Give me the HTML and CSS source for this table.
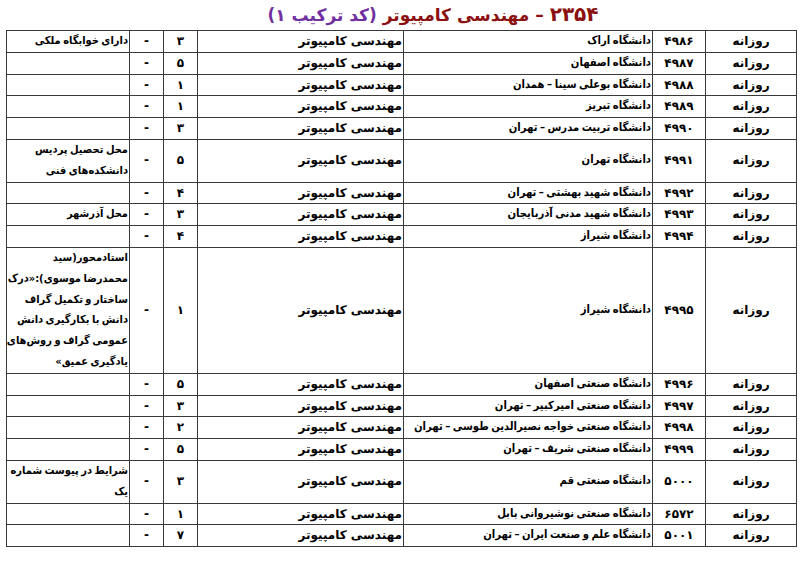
FILE: index.html
```html
<!DOCTYPE html>
<html lang="fa" dir="rtl">
<head>
<meta charset="utf-8">
<title>۲۳۵۴ – مهندسی کامپیوتر</title>
<link rel="stylesheet" href="styles.css">
</head>
<body>
<h1 class="title"><span class="title-main"><span class="title-num">۲۳۵۴</span> – مهندسی کامپیوتر</span> <span class="title-sub">(کد ترکیب ۱)</span></h1>
<table class="grid">
<colgroup>
<col class="c-type"><col class="c-code"><col class="c-uni"><col class="c-field"><col class="c-count"><col class="c-dash"><col class="c-note">
</colgroup>
<tbody>
<tr><td class="ctr">روزانه</td><td class="ctr">۴۹۸۶</td><td class="uni">دانشگاه اراک</td><td>مهندسی کامپیوتر</td><td class="ctr">۳</td><td class="ctr">-</td><td class="note">دارای خوابگاه ملکی</td></tr>
<tr><td class="ctr">روزانه</td><td class="ctr">۴۹۸۷</td><td class="uni">دانشگاه اصفهان</td><td>مهندسی کامپیوتر</td><td class="ctr">۵</td><td class="ctr">-</td><td class="note"></td></tr>
<tr><td class="ctr">روزانه</td><td class="ctr">۴۹۸۸</td><td class="uni">دانشگاه بوعلی سینا – همدان</td><td>مهندسی کامپیوتر</td><td class="ctr">۱</td><td class="ctr">-</td><td class="note"></td></tr>
<tr><td class="ctr">روزانه</td><td class="ctr">۴۹۸۹</td><td class="uni">دانشگاه تبریز</td><td>مهندسی کامپیوتر</td><td class="ctr">۱</td><td class="ctr">-</td><td class="note"></td></tr>
<tr><td class="ctr">روزانه</td><td class="ctr">۴۹۹۰</td><td class="uni">دانشگاه تربیت مدرس – تهران</td><td>مهندسی کامپیوتر</td><td class="ctr">۳</td><td class="ctr">-</td><td class="note"></td></tr>
<tr><td class="ctr">روزانه</td><td class="ctr">۴۹۹۱</td><td class="uni">دانشگاه تهران</td><td>مهندسی کامپیوتر</td><td class="ctr">۵</td><td class="ctr">-</td><td class="note">محل تحصیل پردیس<br>دانشکده‌های فنی</td></tr>
<tr><td class="ctr">روزانه</td><td class="ctr">۴۹۹۲</td><td class="uni">دانشگاه شهید بهشتی – تهران</td><td>مهندسی کامپیوتر</td><td class="ctr">۴</td><td class="ctr">-</td><td class="note"></td></tr>
<tr><td class="ctr">روزانه</td><td class="ctr">۴۹۹۳</td><td class="uni">دانشگاه شهید مدنی آذربایجان</td><td>مهندسی کامپیوتر</td><td class="ctr">۳</td><td class="ctr">-</td><td class="note">محل آذرشهر</td></tr>
<tr><td class="ctr">روزانه</td><td class="ctr">۴۹۹۴</td><td class="uni">دانشگاه شیراز</td><td>مهندسی کامپیوتر</td><td class="ctr">۴</td><td class="ctr">-</td><td class="note"></td></tr>
<tr><td class="ctr">روزانه</td><td class="ctr">۴۹۹۵</td><td class="uni">دانشگاه شیراز</td><td>مهندسی کامپیوتر</td><td class="ctr">۱</td><td class="ctr">-</td><td class="note">استادمحور(سید<br>محمدرضا موسوی):«درک<br>ساختار و تکمیل گراف<br>دانش با بکارگیری دانش<br>عمومی گراف و روش‌های<br>یادگیری عمیق»</td></tr>
<tr><td class="ctr">روزانه</td><td class="ctr">۴۹۹۶</td><td class="uni">دانشگاه صنعتی اصفهان</td><td>مهندسی کامپیوتر</td><td class="ctr">۵</td><td class="ctr">-</td><td class="note"></td></tr>
<tr><td class="ctr">روزانه</td><td class="ctr">۴۹۹۷</td><td class="uni">دانشگاه صنعتی امیرکبیر – تهران</td><td>مهندسی کامپیوتر</td><td class="ctr">۳</td><td class="ctr">-</td><td class="note"></td></tr>
<tr><td class="ctr">روزانه</td><td class="ctr">۴۹۹۸</td><td class="uni">دانشگاه صنعتی خواجه نصیرالدین طوسی – تهران</td><td>مهندسی کامپیوتر</td><td class="ctr">۲</td><td class="ctr">-</td><td class="note"></td></tr>
<tr><td class="ctr">روزانه</td><td class="ctr">۴۹۹۹</td><td class="uni">دانشگاه صنعتی شریف – تهران</td><td>مهندسی کامپیوتر</td><td class="ctr">۵</td><td class="ctr">-</td><td class="note"></td></tr>
<tr><td class="ctr">روزانه</td><td class="ctr">۵۰۰۰</td><td class="uni">دانشگاه صنعتی قم</td><td>مهندسی کامپیوتر</td><td class="ctr">۳</td><td class="ctr">-</td><td class="note">شرایط در پیوست شماره<br>یک</td></tr>
<tr><td class="ctr">روزانه</td><td class="ctr">۶۵۷۲</td><td class="uni">دانشگاه صنعتی نوشیروانی بابل</td><td>مهندسی کامپیوتر</td><td class="ctr">۱</td><td class="ctr">-</td><td class="note"></td></tr>
<tr><td class="ctr">روزانه</td><td class="ctr">۵۰۰۱</td><td class="uni">دانشگاه علم و صنعت ایران – تهران</td><td>مهندسی کامپیوتر</td><td class="ctr">۷</td><td class="ctr">-</td><td class="note"></td></tr>
</tbody>
</table>
</body>
</html>
```

FILE: styles.css
```css
html, body {
  margin: 0;
  padding: 0;
  background: #ffffff;
}
body {
  font-family: "DejaVu Sans", "Noto Sans", sans-serif;
  font-weight: bold;
  color: #000;
  padding: 0 3px 0 7px;
}
.title {
  margin: 0;
  height: 30px;
  line-height: 28px;
  font-size: 17px;
  text-align: center;
  font-weight: bold;
  padding-left: 62px;
}
.title-main {
  color: #8b1010;
}
.title-num {
  font-size: 20px;
}
.title-sub {
  color: #7030a0;
}
.grid {
  border-collapse: collapse;
  table-layout: fixed;
  width: 791px;
  font-size: 12px;
}
.grid td {
  border: 1px solid #3a3a3a;
  padding: 0 1px 0 0;
  line-height: 20.8px;
  vertical-align: middle;
  text-align: right;
  white-space: nowrap;
}
.grid td.ctr {
  text-align: center;
  padding: 0;
}
.grid td.uni,
.grid td.note {
  font-family: "DejaVu Sans Condensed", "DejaVu Sans", sans-serif;
  font-size: 11px;
  word-spacing: -1px;
  overflow: hidden;
}
.grid td.uni {
  font-size: 11.2px;
}
.c-type { width: 91px; }
.c-code { width: 53px; }
.c-uni { width: 249px; }
.c-field { width: 206px; }
.c-count { width: 34px; }
.c-dash { width: 34px; }
.c-note { width: 123px; }
```
